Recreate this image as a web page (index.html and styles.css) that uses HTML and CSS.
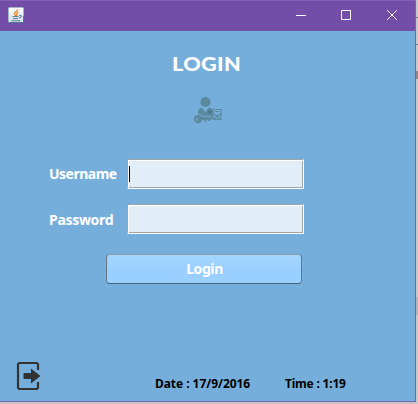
FILE: index.html
```html
<!DOCTYPE html>
<html lang="en">
<head>
<meta charset="utf-8">
<title>Login</title>
<link rel="stylesheet" href="styles.css">
</head>
<body>
<div class="desktop">
  <main class="window">
    <header class="titlebar">
      <svg class="java" width="16" height="16" viewBox="0 0 16 16">
        <defs><linearGradient id="tile" x2="0" y2="1"><stop stop-color="#fff"/><stop offset="1" stop-color="#d3dde3"/></linearGradient></defs>
        <rect x=".5" y=".5" width="15" height="15" rx="1" fill="url(#tile)" stroke="#a3b5c5"/>
        <path d="M.5 15.500h15V9" fill="none" stroke="#547791"/>
        <path d="M10 2.500C9 4.500 6 5 6.500 7l1.300 2M10.500 5C8.500 6 8 7 9 9" fill="none" stroke="#ee8331" stroke-width="1.300"/>
        <path d="M4.500 9.500h6M5 11.500h5M3.500 13.700h8.500M11 8.500c3-1 3 2 0 2.500" fill="none" stroke="#557f9d" stroke-width="1.100"/>
      </svg>
      <nav class="controls">
        <svg width="10" height="10" viewBox="0 0 10 10"><path d="M0 5.500h10"/></svg>
        <svg width="10" height="10" viewBox="0 0 10 10"><path d="M.5.5h9v9h-9z"/></svg>
        <svg width="10" height="10" viewBox="0 0 10 10"><path d="M.2.2l9.600 9.600M9.800.2L.2 9.800"/></svg>
      </nav>
    </header>
    <section class="content">
      <h1>LOGIN</h1>
      <svg class="user" width="30" height="29" viewBox="0 0 30 29">
        <g fill="#5b8a9f">
          <circle cx="12.500" cy="6" r="5.100"/>
          <path d="M5 18v-2Q5.500 12 9 11.500l3.500 5 3.500-5q3.500.5 4 3.500v7H11z"/>
          <circle cx="5.200" cy="23" r="4.300"/>
          <path d="M8 21h10.500v3H17v1h-2v-1h-1.500v2h-2v-2H8z"/>
        </g>
        <path d="M4 18.200Q8 17.500 9.800 20.400h8.500" fill="none" stroke="#75aedb" stroke-width=".8"/>
        <circle cx="3.700" cy="23.500" r="1.100" fill="#75aedb"/>
        <path d="M14.500 14.500h4v3h-4z" fill="#49798e"/>
        <path d="M20 13.500h8v10h-8zM22 15.500h4M20 17.500l4 2.500 4-2.500M21.500 23l2.500-3 2.500 3" fill="none" stroke="#5b8a9f" stroke-width="1.200"/>
      </svg>
      <form class="form">
        <div class="row"><label>Username</label><div class="field"><i class="caret"></i></div></div>
        <div class="row"><label class="password">Password</label><div class="field"></div></div>
        <button type="button">Login</button>
      </form>
      <footer>
        <svg class="exit" width="26" height="30" viewBox="0 0 26 30">
          <path d="M22 9V4Q22 2 20 2H4Q2 2 2 4v22q0 2 2 2h16q2 0 2-2v-5" fill="none" stroke="#333" stroke-width="2.200"/>
          <path d="M7.500 12H15V7.500l9.500 7.500-9.500 7.500V18H7.500z" fill="#333"/>
        </svg>
        <span class="date">Date : 17/9/2016</span>
        <span class="time">Time : 1:19</span>
      </footer>
    </section>
  </main>
  <aside class="behind"><i class="line"></i><i class="line blue"></i><i class="mark"></i><i class="thumb"></i></aside>
</div>
</body>
</html>
```
FILE: styles.css
```css
* { box-sizing: border-box; }
body { margin: 0; width: 418px; height: 404px; overflow: hidden; background: #c5c5c8; font-family: "Noto Sans", sans-serif; }
.desktop { display: grid; grid-template-columns: 416px 2px; height: 404px; }
.window { width: 416px; height: 402px; border-right: 1px solid #7d62b4; border-bottom: 1px solid #7d62b4; background: #75aedb; }
.titlebar { display: flex; justify-content: space-between; height: 31px; padding: 6px 18px 0 8px; background: #744da9; border-top: 1px solid #8360b2; }
.controls { display: flex; gap: 36px; padding-top: 3px; }
.controls svg { fill: none; stroke: #fff; stroke-width: 1; }
.controls svg:first-child { margin-right: -1px; }
.content { display: flex; flex-direction: column; height: 370px; }
h1 { margin: 20px 0 0 171.500px; width: 66px; height: 26px; font: 900 19.500px/26px Lato, sans-serif; color: #fff; white-space: nowrap; letter-spacing: .3px; transform: scaleX(1.110); transform-origin: left; }
.user { margin: 19px 0 0 193px; flex: none; }
.form { margin: 34px 0 0 49px; }
.row { display: flex; height: 30px; margin-bottom: 15px; }
.row label { width: 78px; color: #fff; font-size: 14px; line-height: 30px; font-weight: 700; letter-spacing: -.5px; }
.row .password { padding-top: 1px; letter-spacing: -.3px; }
.field { width: 177px; height: 30px; padding: 6px 0 0 1px; background: #e1eef8; border: 1px solid #a0a5aa; border-right-color: #fff; border-bottom-color: #fff; box-shadow: inset 1px 1px #fff, inset -1px -1px #a0a5aa; }
.caret { display: block; width: 1px; height: 16px; background: #000; }
button { display: block; width: 196px; height: 30px; margin: 20px 0 0 57px; padding: 0 0 0 1px; border: 1px solid; border-color: #8c9da9 #65788a #4b6174 #65788a; border-radius: 4px; background: linear-gradient(#a5d8ff, #99ceff 55%, #9bd2ff); color: #fff; font: 700 14px/28px "Noto Sans", sans-serif; letter-spacing: -.4px; }
footer { display: flex; margin-top: auto; height: 40px; font-size: 12px; line-height: 18px; font-weight: 700; color: #000; white-space: nowrap; }
.exit { margin-left: 16px; flex: none; }
.date { margin: 14px 0 0 113px; width: 130px; letter-spacing: -.05px; }
.time { margin-top: 14px; letter-spacing: -.2px; }
.behind { height: 404px; background: #c8c8cb; }
.behind i { display: block; }
.line { height: 1px; margin-top: 17px; background: #77777c; }
.blue { margin-top: 26px; background: #6d80a4; }
.mark { margin-top: 26px; height: 8px; background: #958589; }
.thumb { margin-top: 218px; height: 18px; background: #b5b5b9; }
```
